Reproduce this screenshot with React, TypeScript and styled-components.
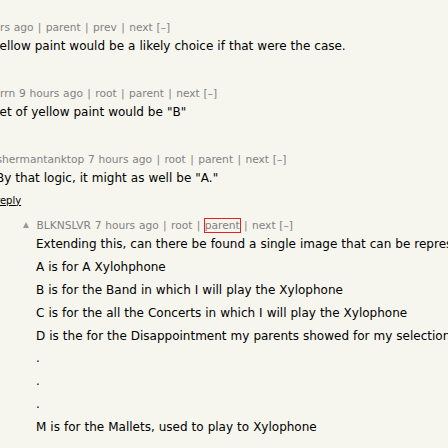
import React from "react";
import styled, { createGlobalStyle } from "styled-components";

const Global = createGlobalStyle`
  html, body {
    margin: 0;
    padding: 0;
    background: #f6f6ef;
    width: 448px;
    height: 448px;
    overflow: hidden;
  }
  #root {
    width: 448px;
    height: 448px;
    overflow: hidden;
  }
`;

const Thread = styled.div`
  width: 448px;
  padding-top: 20.5px;
  font-family: Verdana, "DejaVu Sans", sans-serif;
  overflow: hidden;
`;

const Row = styled.div<{ $left: number }>`
  display: flex;
  align-items: flex-start;
  margin-left: ${(p) => p.$left}px;
  margin-bottom: 12px;
  white-space: nowrap;
`;

const VoteCell = styled.div`
  flex: 0 0 14px;
  width: 14px;
  padding-top: 3px;
  padding-left: 1px;
  box-sizing: border-box;
`;

const VoteArrow = styled.div`
  width: 0;
  height: 0;
  border-left: 3.5px solid transparent;
  border-right: 3.5px solid transparent;
  border-bottom: 6.5px solid #9a9a9a;
`;

const Body = styled.div`
  display: flex;
  flex-direction: column;
`;

const Meta = styled.div`
  font-size: 10.667px;
  line-height: 13px;
  color: #828282;
  word-spacing: 0.36px;
  padding-left: 0.5px;
`;

const Sep = styled.span`
  margin: 0 0.62px;
`;

const MetaLink = styled.span<{ $focused?: boolean }>`
  color: #828282;
  ${(p) => (p.$focused ? "outline: 1px solid #e8201c; outline-offset: 0px;" : "")}
`;

const CommentText = styled.div`
  margin-top: 5.5px;
  font-size: 12px;
  line-height: 15px;
  color: #000;
  word-spacing: 0.2px;
`;

const Para = styled.p`
  margin: 0;
  & + & {
    margin-top: 7.875px;
  }
`;

const ReplyLine = styled.div`
  margin-top: 8.5px;
  height: 12px;
  font-size: 10px;
  line-height: 12px;
  color: #000;
`;

const ReplyLink = styled.span`
  text-decoration: underline;
`;

type CommentProps = {
  left: number;
  meta: React.ReactNode[];
  paras: string[];
  vote?: boolean;
  reply?: string;
};

function Comment({ left, meta, paras, vote, reply }: CommentProps) {
  return (
    <Row $left={left}>
      <VoteCell>{vote ? <VoteArrow /> : null}</VoteCell>
      <Body>
        <Meta>
          {meta.map((m, i) => (
            <React.Fragment key={i}>
              {i > 0 ? (
                <>
                  {" "}
                  <Sep>|</Sep>{" "}
                </>
              ) : null}
              {m}
            </React.Fragment>
          ))}
        </Meta>
        <CommentText>
          {paras.map((t, i) => (
            <Para key={i}>{t}</Para>
          ))}
        </CommentText>
        <ReplyLine>{reply ? <ReplyLink>{reply}</ReplyLink> : null}</ReplyLine>
      </Body>
    </Row>
  );
}

export default function App() {
  return (
    <>
      <Global />
      <Thread>
        <Comment
          left={-14.5}
          meta={[
            <MetaLink>rs ago</MetaLink>,
            <MetaLink>parent</MetaLink>,
            <MetaLink>prev</MetaLink>,
            <MetaLink>next [–]</MetaLink>,
          ]}
          paras={["ellow paint would be a likely choice if that were the case."]}
        />
        <Comment
          left={-14.5}
          meta={[
            <MetaLink>rrn 9 hours ago</MetaLink>,
            <MetaLink>root</MetaLink>,
            <MetaLink>parent</MetaLink>,
            <MetaLink>next [–]</MetaLink>,
          ]}
          paras={["et of yellow paint would be \"B\""]}
        />
        <Comment
          left={-18}
          vote
          meta={[
            <MetaLink>shermantanktop 7 hours ago</MetaLink>,
            <MetaLink>root</MetaLink>,
            <MetaLink>parent</MetaLink>,
            <MetaLink>next [–]</MetaLink>,
          ]}
          paras={["By that logic, it might as well be \"A.\""]}
          reply="reply"
        />
        <Comment
          left={22}
          vote
          meta={[
            <MetaLink>BLKNSLVR 7 hours ago</MetaLink>,
            <MetaLink>root</MetaLink>,
            <MetaLink $focused>parent</MetaLink>,
            <MetaLink>next [–]</MetaLink>,
          ]}
          paras={[
            "Extending this, can there be found a single image that can be represented",
            "A is for A Xylohphone",
            "B is for the Band in which I will play the Xylophone",
            "C is for the all the Concerts in which I will play the Xylophone",
            "D is the for the Disappointment my parents showed for my selection",
            ".",
            ".",
            ".",
            "M is for the Mallets, used to play to Xylophone",
          ]}
        />
      </Thread>
    </>
  );
}
